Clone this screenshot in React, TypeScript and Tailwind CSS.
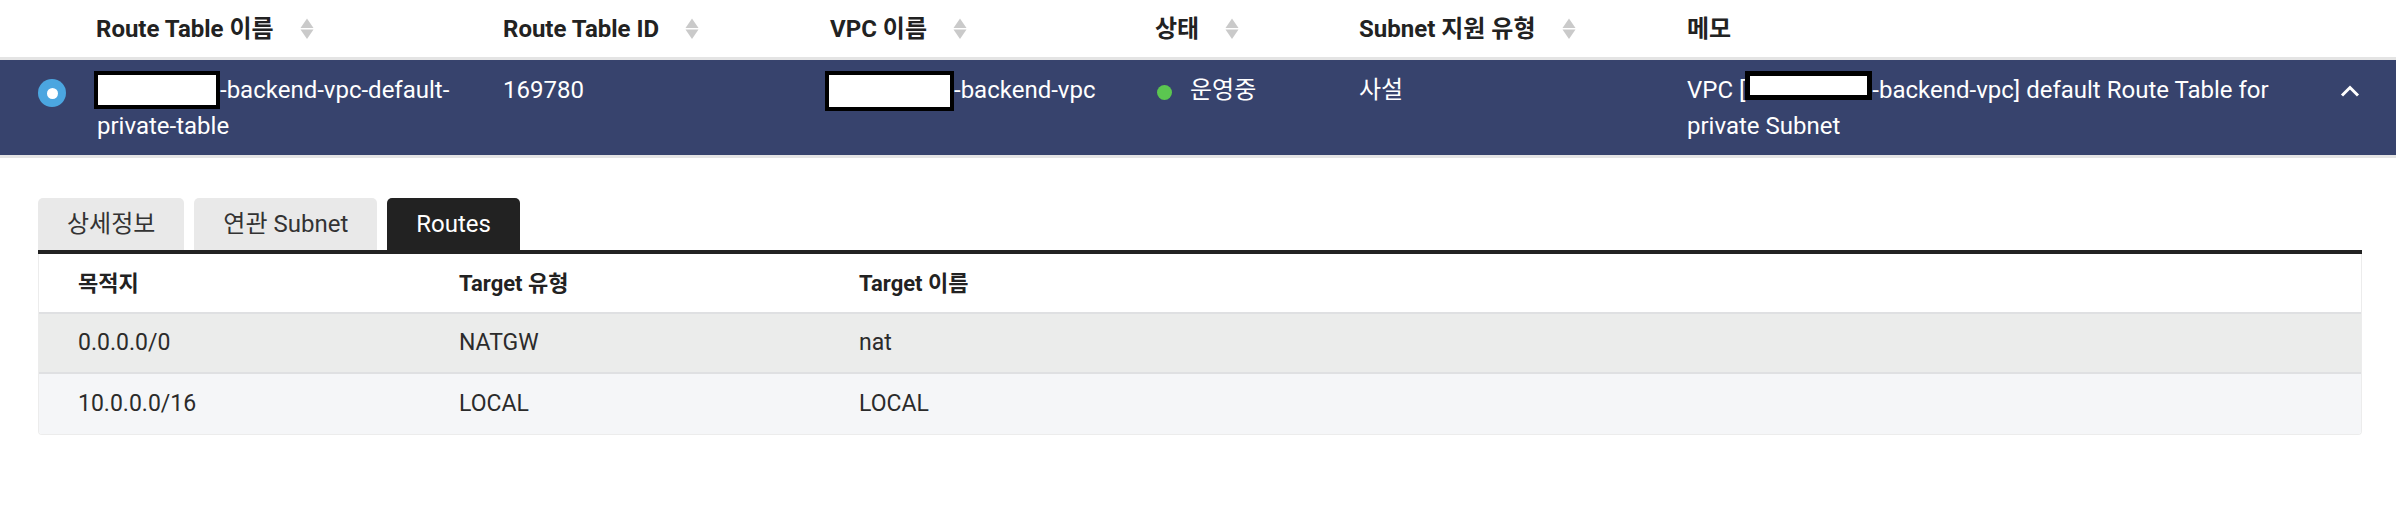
function SortIcon() {
  return (
    <svg width="14" height="21" viewBox="0 0 14 21" className="ml-[26px] shrink-0">
      <path d="M0.5 10 L7 0.5 L13.5 10 Z" fill="#cacaca" />
      <path d="M0.5 11.5 L13.5 11.5 L7 21 Z" fill="#cacaca" />
    </svg>
  );
}

function Tab({ label, active }: { label: string; active?: boolean }) {
  return (
    <div
      className={
        active
          ? "flex h-[52px] items-center rounded-t-[5px] bg-[#222222] px-[29px] text-[24px] text-white"
          : "flex h-[52px] items-center rounded-t-[5px] bg-[#e9e9e9] px-[29px] text-[24px] text-[#333333]"
      }
    >
      {label}
    </div>
  );
}

const routes = [
  { dest: "0.0.0.0/0", type: "NATGW", name: "nat", bg: "bg-[#ebeceb]" },
  { dest: "10.0.0.0/16", type: "LOCAL", name: "LOCAL", bg: "bg-[#f5f6f8]" },
];

export default function App() {
  return (
    <div className="h-[508px] w-[2396px] overflow-hidden bg-white font-['Roboto','Noto_Sans_CJK_KR',sans-serif] text-[#222222]">
      {/* list header */}
      <div className="flex h-[60px] items-center border-b-[3px] border-[#e4e4e4] text-[24px] font-bold">
        <div className="w-[96px]" />
        <div className="flex w-[407px] items-center">
          <span>Route Table 이름</span>
          <SortIcon />
        </div>
        <div className="flex w-[327px] items-center">
          <span>Route Table ID</span>
          <SortIcon />
        </div>
        <div className="flex w-[325px] items-center">
          <span>VPC 이름</span>
          <SortIcon />
        </div>
        <div className="flex w-[204px] items-center">
          <span>상태</span>
          <SortIcon />
        </div>
        <div className="flex w-[326px] items-center">
          <span>Subnet 지원 유형</span>
          <SortIcon />
        </div>
        <div className="flex-1 pl-[2px]">메모</div>
      </div>

      {/* selected row */}
      <div className="flex h-[98px] items-start border-b-[3px] border-[#e4e4e4] bg-[#37436d] pt-[12px] text-[24px] leading-[36px] text-white">
        <div className="w-[96px] pl-[38px] pt-[7px]">
          <div className="flex h-[28px] w-[28px] items-center justify-center rounded-full bg-[#4ba6e0]">
            <div className="h-[11px] w-[11px] rounded-full bg-white" />
          </div>
        </div>
        <div className="w-[407px] pl-[1px] pr-[27px]">
          <span className="-my-px -ml-[3px] inline-block h-[38px] w-[126px] border-[4px] border-black bg-white align-[-10px]" />
          -backend-vpc-default-private-table
        </div>
        <div className="w-[327px]">169780</div>
        <div className="w-[325px]">
          <span className="-my-[2px] -ml-[5px] inline-block h-[40px] w-[129px] border-[4px] border-black bg-white align-[-11px]" />
          -backend-vpc
        </div>
        <div className="flex w-[204px] items-start">
          <span className="ml-[2px] mt-[13px] h-[15px] w-[15px] rounded-full bg-[#5bc650]" />
          <span className="ml-[18px]">운영중</span>
        </div>
        <div className="w-[326px]">사설</div>
        <div className="flex-1 pl-[2px]">
          <div className="w-[610px]">
            VPC [
            <span className="-mt-[2px] inline-block h-[29px] w-[127px] border-[5px] border-black bg-white align-[-2px]" />
            -backend-vpc] default Route Table for private Subnet
          </div>
        </div>
        <div className="mr-[36px] mt-[13px] w-[20px]">
          <svg width="20" height="12" viewBox="0 0 20 12">
            <polyline points="2,10.5 10,2.5 18,10.5" fill="none" stroke="#ffffff" strokeWidth="3" />
          </svg>
        </div>
      </div>

      {/* detail panel */}
      <div className="ml-[38px] mr-[34px] mt-[40px]">
        <div className="flex items-end gap-[10px]">
          <Tab label="상세정보" />
          <Tab label="연관 Subnet" />
          <Tab label="Routes" active />
        </div>
        <div className="h-[4px] bg-[#222222]" />
        <div className="overflow-hidden rounded-b-[4px] border-x border-b border-[#ececec]">
          <div className="flex h-[60px] items-center border-b-2 border-[#dfe0e2] bg-white text-[22px] font-bold">
            <div className="w-[380px] pl-[39px]">목적지</div>
            <div className="w-[400px] pl-[40px]">Target 유형</div>
            <div className="flex-1 pl-[40px]">Target 이름</div>
          </div>
          {routes.map((r, i) => (
            <div
              key={r.dest}
              className={
                (i === 0 ? "border-b-2 border-[#dfe0e2] " : "") +
                "flex h-[60px] items-center text-[23px] text-[#2b2b2b] " +
                r.bg
              }
            >
              <div className="w-[380px] pl-[39px]">{r.dest}</div>
              <div className="w-[400px] pl-[40px]">{r.type}</div>
              <div className="flex-1 pl-[40px]">{r.name}</div>
            </div>
          ))}
        </div>
      </div>
    </div>
  );
}
